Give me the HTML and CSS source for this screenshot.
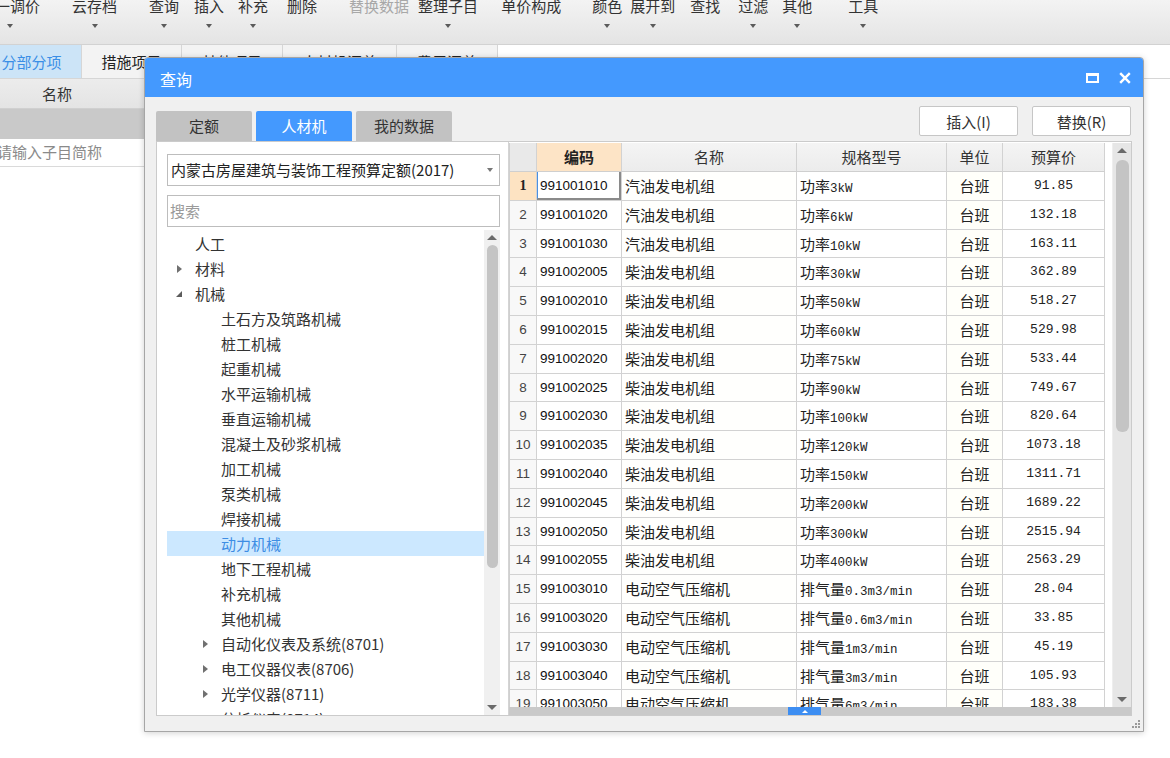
FILE: index.html
```html
<!DOCTYPE html>
<html lang="zh-CN">
<head>
<meta charset="utf-8">
<title>查询</title>
<link rel="stylesheet" href="styles.css">
</head>
<body>
<div class="app">
  <div class="toolbar">
    <div class="tb-item first"><span class="tb-label">统一调价</span><span class="tb-arrow"></span></div>
    <div class="tb-item m32"><span class="tb-label">云存档</span><span class="tb-arrow"></span></div>
    <div class="tb-item m32"><span class="tb-label">查询</span><span class="tb-arrow"></span></div>
    <div class="tb-item m15"><span class="tb-label">插入</span><span class="tb-arrow"></span></div>
    <div class="tb-item m14"><span class="tb-label">补充</span><span class="tb-arrow"></span></div>
    <div class="tb-item m19"><span class="tb-label">删除</span><span class="tb-arrow hidden"></span></div>
    <div class="tb-item m32 disabled"><span class="tb-label">替换数据</span><span class="tb-arrow hidden"></span></div>
    <div class="tb-item m9"><span class="tb-label">整理子目</span><span class="tb-arrow"></span></div>
    <div class="tb-item m23"><span class="tb-label">单价构成</span><span class="tb-arrow hidden"></span></div>
    <div class="tb-item m31"><span class="tb-label">颜色</span><span class="tb-arrow"></span></div>
    <div class="tb-item m8"><span class="tb-label">展开到</span><span class="tb-arrow"></span></div>
    <div class="tb-item m15"><span class="tb-label">查找</span><span class="tb-arrow hidden"></span></div>
    <div class="tb-item m18"><span class="tb-label">过滤</span><span class="tb-arrow"></span></div>
    <div class="tb-item m14"><span class="tb-label">其他</span><span class="tb-arrow"></span></div>
    <div class="tb-item m36"><span class="tb-label">工具</span><span class="tb-arrow"></span></div>
  </div>
  <div class="doc-tabs">
    <div class="doc-tab active">分部分项</div>
    <div class="doc-tab">措施项目</div>
    <div class="doc-tab w101">其他项目</div>
    <div class="doc-tab w114">人材机汇总</div>
    <div class="doc-tab w101">费用汇总</div>
  </div>
  <div class="sheet">
    <div class="sheet-head"><div class="sheet-col">名称</div></div>
    <div class="sheet-band"></div>
    <div class="sheet-input">请输入子目简称</div>
  </div>
</div>

<div class="dialog">
  <div class="dlg-title">
    <span class="dlg-name">查询</span>
    <div class="dlg-ctrls">
      <svg class="ic-max" width="13" height="10" viewBox="0 0 13 10"><path d="M1 1.5 H12 M1 1 V9 H12 V1" fill="none" stroke="#fff" stroke-width="2"/><rect x="0" y="0" width="13" height="3" fill="#fff"/></svg>
      <svg class="ic-close" width="12" height="12" viewBox="0 0 12 12"><path d="M1.2 1.2 L10.8 10.8 M10.8 1.2 L1.2 10.8" stroke="#fff" stroke-width="2.4"/></svg>
    </div>
  </div>
  <div class="dlg-body">
    <div class="dlg-top">
      <div class="dlg-tabs">
        <div class="dlg-tab">定额</div>
        <div class="dlg-tab active">人材机</div>
        <div class="dlg-tab">我的数据</div>
      </div>
      <div class="dlg-btns">
        <button class="btn">插入(I)</button>
        <button class="btn">替换(R)</button>
      </div>
    </div>
    <div class="dlg-content">
      <div class="left">
        <div class="select"><span>内蒙古房屋建筑与装饰工程预算定额(2017)</span><span class="caret-down"></span></div>
        <div class="search">搜索</div>
        <div class="tree-wrap">
          <ul class="tree">
            <li class="l0"><span class="tw"></span>人工</li>
            <li class="l0"><span class="tw closed"></span>材料</li>
            <li class="l0"><span class="tw open"></span>机械</li>
            <li class="l1"><span class="tw"></span>土石方及筑路机械</li>
            <li class="l1"><span class="tw"></span>桩工机械</li>
            <li class="l1"><span class="tw"></span>起重机械</li>
            <li class="l1"><span class="tw"></span>水平运输机械</li>
            <li class="l1"><span class="tw"></span>垂直运输机械</li>
            <li class="l1"><span class="tw"></span>混凝土及砂浆机械</li>
            <li class="l1"><span class="tw"></span>加工机械</li>
            <li class="l1"><span class="tw"></span>泵类机械</li>
            <li class="l1"><span class="tw"></span>焊接机械</li>
            <li class="l1 sel"><span class="tw"></span>动力机械</li>
            <li class="l1"><span class="tw"></span>地下工程机械</li>
            <li class="l1"><span class="tw"></span>补充机械</li>
            <li class="l1"><span class="tw"></span>其他机械</li>
            <li class="l1"><span class="tw closed"></span>自动化仪表及系统(8701)</li>
            <li class="l1"><span class="tw closed"></span>电工仪器仪表(8706)</li>
            <li class="l1"><span class="tw closed"></span>光学仪器(8711)</li>
            <li class="l1"><span class="tw closed"></span>分析仪表(8714)</li>
          </ul>
          <div class="vscroll small">
            <span class="arr-up"></span>
            <span class="thumb t-tree"></span>
            <span class="arr-down"></span>
          </div>
        </div>
      </div>
      <div class="right">
        <div class="grid-area">
          <div class="grid">
            <div class="row head">
              <div class="c n"></div>
              <div class="c code hl">编码</div>
              <div class="c name">名称</div>
              <div class="c spec">规格型号</div>
              <div class="c unit">单位</div>
              <div class="c price">预算价</div>
            </div>
            <div class="row cur"><div class="c n">1</div><div class="c code focus">991001010</div><div class="c name">汽油发电机组</div><div class="c spec">功率<span class="mono">3kW</span></div><div class="c unit">台班</div><div class="c price">91.85</div></div>
            <div class="row"><div class="c n">2</div><div class="c code">991001020</div><div class="c name">汽油发电机组</div><div class="c spec">功率<span class="mono">6kW</span></div><div class="c unit">台班</div><div class="c price">132.18</div></div>
            <div class="row"><div class="c n">3</div><div class="c code">991001030</div><div class="c name">汽油发电机组</div><div class="c spec">功率<span class="mono">10kW</span></div><div class="c unit">台班</div><div class="c price">163.11</div></div>
            <div class="row"><div class="c n">4</div><div class="c code">991002005</div><div class="c name">柴油发电机组</div><div class="c spec">功率<span class="mono">30kW</span></div><div class="c unit">台班</div><div class="c price">362.89</div></div>
            <div class="row"><div class="c n">5</div><div class="c code">991002010</div><div class="c name">柴油发电机组</div><div class="c spec">功率<span class="mono">50kW</span></div><div class="c unit">台班</div><div class="c price">518.27</div></div>
            <div class="row"><div class="c n">6</div><div class="c code">991002015</div><div class="c name">柴油发电机组</div><div class="c spec">功率<span class="mono">60kW</span></div><div class="c unit">台班</div><div class="c price">529.98</div></div>
            <div class="row"><div class="c n">7</div><div class="c code">991002020</div><div class="c name">柴油发电机组</div><div class="c spec">功率<span class="mono">75kW</span></div><div class="c unit">台班</div><div class="c price">533.44</div></div>
            <div class="row"><div class="c n">8</div><div class="c code">991002025</div><div class="c name">柴油发电机组</div><div class="c spec">功率<span class="mono">90kW</span></div><div class="c unit">台班</div><div class="c price">749.67</div></div>
            <div class="row"><div class="c n">9</div><div class="c code">991002030</div><div class="c name">柴油发电机组</div><div class="c spec">功率<span class="mono">100kW</span></div><div class="c unit">台班</div><div class="c price">820.64</div></div>
            <div class="row"><div class="c n">10</div><div class="c code">991002035</div><div class="c name">柴油发电机组</div><div class="c spec">功率<span class="mono">120kW</span></div><div class="c unit">台班</div><div class="c price">1073.18</div></div>
            <div class="row"><div class="c n">11</div><div class="c code">991002040</div><div class="c name">柴油发电机组</div><div class="c spec">功率<span class="mono">150kW</span></div><div class="c unit">台班</div><div class="c price">1311.71</div></div>
            <div class="row"><div class="c n">12</div><div class="c code">991002045</div><div class="c name">柴油发电机组</div><div class="c spec">功率<span class="mono">200kW</span></div><div class="c unit">台班</div><div class="c price">1689.22</div></div>
            <div class="row"><div class="c n">13</div><div class="c code">991002050</div><div class="c name">柴油发电机组</div><div class="c spec">功率<span class="mono">300kW</span></div><div class="c unit">台班</div><div class="c price">2515.94</div></div>
            <div class="row"><div class="c n">14</div><div class="c code">991002055</div><div class="c name">柴油发电机组</div><div class="c spec">功率<span class="mono">400kW</span></div><div class="c unit">台班</div><div class="c price">2563.29</div></div>
            <div class="row"><div class="c n">15</div><div class="c code">991003010</div><div class="c name">电动空气压缩机</div><div class="c spec">排气量<span class="mono">0.3m3/min</span></div><div class="c unit">台班</div><div class="c price">28.04</div></div>
            <div class="row"><div class="c n">16</div><div class="c code">991003020</div><div class="c name">电动空气压缩机</div><div class="c spec">排气量<span class="mono">0.6m3/min</span></div><div class="c unit">台班</div><div class="c price">33.85</div></div>
            <div class="row"><div class="c n">17</div><div class="c code">991003030</div><div class="c name">电动空气压缩机</div><div class="c spec">排气量<span class="mono">1m3/min</span></div><div class="c unit">台班</div><div class="c price">45.19</div></div>
            <div class="row"><div class="c n">18</div><div class="c code">991003040</div><div class="c name">电动空气压缩机</div><div class="c spec">排气量<span class="mono">3m3/min</span></div><div class="c unit">台班</div><div class="c price">105.93</div></div>
            <div class="row"><div class="c n">19</div><div class="c code">991003050</div><div class="c name">电动空气压缩机</div><div class="c spec">排气量<span class="mono">6m3/min</span></div><div class="c unit">台班</div><div class="c price">183.38</div></div>
          </div>
          <div class="vscroll big">
            <span class="arr-up"></span>
            <span class="thumb t-grid"></span>
            <span class="arr-down"></span>
          </div>
        </div>
        <div class="hscroll"><span class="hthumb"><span class="hthumb-arr"></span></span></div>
      </div>
    </div>
    <div class="dlg-foot">
      <svg class="grip" width="9" height="9" viewBox="0 0 9 9" fill="#9a9a9a"><rect x="7" y="1" width="2" height="2"/><rect x="4" y="4" width="2" height="2"/><rect x="7" y="4" width="2" height="2"/><rect x="1" y="7" width="2" height="2"/><rect x="4" y="7" width="2" height="2"/><rect x="7" y="7" width="2" height="2"/></svg>
    </div>
  </div>
</div>
</body>
</html>
```

FILE: styles.css
```css
* { box-sizing: border-box; }
html, body { margin: 0; padding: 0; }
body {
  width: 1170px;
  height: 758px;
  overflow: hidden;
  position: relative;
  background: #ffffff;
  font-family: "Noto Sans CJK SC", "Liberation Sans", sans-serif;
  font-size: 15px;
  color: #333;
}

/* ---------- background application ---------- */
.toolbar {
  height: 45px;
  display: flex;
  align-items: flex-start;
  background: linear-gradient(#f3f3f3, #e4e4e4);
  border-bottom: 1px solid #d2d2d2;
  overflow: hidden;
}
.tb-item {
  display: flex;
  flex-direction: column;
  align-items: center;
  color: #333;
}
.tb-item.first { margin-left: -20px; }
.tb-item.disabled { color: #a8a8a8; }
.tb-label {
  line-height: 20px;
  margin-top: -4px;
  white-space: nowrap;
}
.tb-arrow {
  width: 0;
  height: 0;
  margin-top: 8px;
  border-left: 3.5px solid transparent;
  border-right: 3.5px solid transparent;
  border-top: 4px solid #5a5a5a;
}
.tb-arrow.hidden { visibility: hidden; }
.m8 { margin-left: 8px; }
.m9 { margin-left: 9px; }
.m14 { margin-left: 14px; }
.m15 { margin-left: 15px; }
.m18 { margin-left: 18px; }
.m19 { margin-left: 19px; }
.m23 { margin-left: 23px; }
.m31 { margin-left: 31px; }
.m32 { margin-left: 32px; }
.m36 { margin-left: 36px; }

.doc-tabs {
  height: 34px;
  display: flex;
  margin-left: -18px;
  border-bottom: 1px solid #d6d6d6;
  background: #ffffff;
}
.doc-tab {
  width: 100px;
  line-height: 33px;
  text-align: center;
  background: #f3f3f3;
  border-right: 1px solid #d6d6d6;
  color: #222;
}
.doc-tab.w101 { width: 101px; }
.doc-tab.w114 { width: 114px; }
.doc-tab.active { background: #cce4f7; color: #3a8ee6; }

.sheet { width: 1100px; }
.sheet-head {
  height: 30px;
  background: linear-gradient(#ececec, #e4e4e4);
  border-bottom: 1px solid #d0d0d0;
}
.sheet-col {
  width: 114px;
  line-height: 29px;
  text-align: center;
  color: #333;
}
.sheet-band {
  height: 30px;
  background: #c9c9c9;
}
.sheet-input {
  height: 28px;
  line-height: 26px;
  margin-left: -3px;
  color: #8a8a8a;
  border-bottom: 1px solid #dadada;
}

/* ---------- dialog ---------- */
.dialog {
  position: absolute;
  left: 144px;
  top: 57px;
  width: 1000px;
  height: 675px;
  border: 1px solid #a6a6a6;
  border-radius: 4px 4px 0 0;
  background: #f0f0f0;
  box-shadow: 0 1px 6px rgba(0, 0, 0, 0.18);
  display: flex;
  flex-direction: column;
}
.dlg-title {
  height: 39px;
  flex: none;
  background: #4499fe;
  border-radius: 3px 3px 0 0;
  display: flex;
  align-items: center;
  padding: 0 12px 0 15px;
  color: #fff;
}
.dlg-name { font-size: 16px; line-height: 20px; margin-top: 2px; }
.dlg-ctrls {
  margin-left: auto;
  display: flex;
  align-items: center;
  gap: 20px;
  margin-top: 1px;
}
.ic-max { display: block; }
.ic-close { display: block; }

.dlg-body {
  flex: 1;
  display: flex;
  flex-direction: column;
  padding: 9px 11px 0 11px;
}
.dlg-top {
  height: 35px;
  display: flex;
  align-items: flex-start;
}
.dlg-tabs {
  display: flex;
  gap: 4px;
  margin-top: 5px;
}
.dlg-tab {
  width: 96px;
  height: 30px;
  line-height: 30px;
  text-align: center;
  background: #c2c2c2;
  border-radius: 2px 2px 0 0;
  color: #333;
}
.dlg-tab.active { background: #4499fe; color: #fff; }
.dlg-btns {
  margin-left: auto;
  display: flex;
  gap: 14px;
  margin-right: 1px;
}
.btn {
  width: 99px;
  height: 30px;
  padding: 0;
  background: #fff;
  border: 1px solid #c6c6c6;
  border-radius: 2px;
  font-family: "Noto Sans CJK SC", "Liberation Sans", sans-serif;
  font-size: 15px;
  color: #333;
}

.dlg-content {
  height: 575px;
  flex: none;
  background: #fff;
  border: 1px solid #cbcbcb;
  display: flex;
}

/* left panel */
.left {
  width: 352px;
  flex: none;
  border-right: 1px solid #d4d4d4;
  padding: 12px 8px 0 10px;
  display: flex;
  flex-direction: column;
}
.select {
  height: 32px;
  border: 1px solid #bdbdbd;
  display: flex;
  align-items: center;
  padding: 0 0 0 3px;
  color: #222;
  line-height: 20px;
}
.caret-down {
  margin-left: auto;
  margin-right: 6px;
  width: 0;
  height: 0;
  border-left: 3.5px solid transparent;
  border-right: 3.5px solid transparent;
  border-top: 4px solid #777;
}
.search {
  margin-top: 9px;
  height: 32px;
  border: 1px solid #bdbdbd;
  line-height: 30px;
  padding-left: 2px;
  color: #9a9a9a;
}
.tree-wrap {
  margin-top: 3px;
  height: 485px;
  display: flex;
}
.tree {
  flex: 1;
  list-style: none;
  margin: 0;
  padding: 1px 0 0 0;
  overflow: hidden;
}
.tree li {
  height: 25px;
  line-height: 25px;
  display: flex;
  align-items: center;
  white-space: nowrap;
  color: #333;
}
.tree li.l0 { padding-left: 7px; }
.tree li.l1 { padding-left: 33px; }
.tree li.sel { background: #cce8ff; color: #3d8de4; }
.tw {
  width: 14px;
  height: 25px;
  margin-right: 7px;
  position: relative;
  flex: none;
}
.tw.closed::before {
  content: "";
  position: absolute;
  left: 3px;
  top: 9px;
  border-top: 4px solid transparent;
  border-bottom: 4px solid transparent;
  border-left: 5px solid #707070;
}
.tw.open::before {
  content: "";
  position: absolute;
  left: 2px;
  top: 10px;
  border-left: 6px solid transparent;
  border-bottom: 6px solid #5c5c5c;
}

/* scrollbars */
.vscroll {
  flex: none;
  display: flex;
  flex-direction: column;
  align-items: center;
}
.vscroll.small { width: 16px; background: #f0f0f0; }
.vscroll.big {
  width: 19px;
  margin-left: auto;
  background: #e6e6e6;
  border-left: 1px solid #eeeeee;
}
.arr-up, .arr-down {
  width: 0;
  height: 0;
  border-left: 5px solid transparent;
  border-right: 5px solid transparent;
}
.arr-up { border-bottom: 5px solid #6a6a6a; margin-top: 5px; }
.arr-down { border-top: 5px solid #6a6a6a; margin-top: auto; margin-bottom: 5px; }
.thumb {
  display: block;
  background: #c4c4c4;
  border-radius: 6px;
}
.t-tree { width: 11px; height: 323px; margin-top: 5px; }
.t-grid { width: 13px; height: 272px; margin-top: 7px; }

/* right panel / grid */
.right {
  flex: 1;
  display: flex;
  flex-direction: column;
  padding-top: 1px;
  min-width: 0;
}
.grid-area {
  height: 564px;
  display: flex;
  overflow: hidden;
}
.grid {
  width: 596px;
  flex: none;
  border-left: 1px solid #cfcfcf;
  overflow: hidden;
}
.row {
  display: grid;
  grid-template-columns: 27px 85px 175px 150px 56px 102px;
  height: 28.8px;
}
.row.head { height: 29px; }
.c {
  border-right: 1px solid #d2d2d2;
  border-bottom: 1px solid #d2d2d2;
  display: block;
  line-height: 27.8px;
  white-space: nowrap;
  overflow: hidden;
  background: #fff;
  color: #222;
  position: relative;
}
.c.n {
  text-align: center;
  background: #f8f8f8;
  font-family: "Liberation Sans", sans-serif;
  font-size: 13.5px;
  color: #444;
}
.row.cur .c.n {
  background: #fde3c2;
  font-family: "Liberation Serif", serif;
  font-weight: bold;
  font-size: 14px;
  color: #222;
}
.c.code {
  padding-left: 3px;
  font-family: "Liberation Sans", sans-serif;
  font-size: 13.5px;
  color: #111;
}
.c.code.focus::after {
  content: "";
  position: absolute;
  left: -1px;
  top: -1px;
  right: 0;
  bottom: 0;
  border: 1px solid #7a7a7a;
  border-left: 2px solid #4a90e2;
  border-right: 2px solid #8a8a8a;
  border-bottom: 2px solid #8a8a8a;
}
.c.name { padding-left: 3px; background: #fffffd; }
.c.spec { padding-left: 3px; }
.mono {
  font-family: "Liberation Mono", monospace;
  font-size: 12.5px;
}
.c.unit { text-align: center; background: #fffffa; }
.c.price {
  text-align: center;
  font-family: "Liberation Mono", monospace;
  font-size: 13px;
  color: #222;
}

.row.head .c {
  text-align: center;
  background: linear-gradient(#f4f4f4, #ececec);
  color: #333;
  border-bottom: 1px solid #cfcfcf;
  font-family: "Noto Sans CJK SC", "Liberation Sans", sans-serif;
  font-size: 15px;
  font-weight: normal;
  line-height: 28px;
  padding: 0;
}
.row.head .c.n { background: #e9e9e9; }
.row.head .c.hl { background: #fde4c6; font-weight: bold; color: #222; }

.hscroll {
  height: 8px;
  background: #c9c9c9;
  display: flex;
}
.hthumb {
  margin-left: 279px;
  width: 33px;
  height: 8px;
  background: #3d8ef2;
  display: flex;
  justify-content: center;
  align-items: center;
}
.hthumb-arr {
  width: 0;
  height: 0;
  border-left: 3px solid transparent;
  border-right: 3px solid transparent;
  border-bottom: 3px solid #ffffff;
}

.dlg-foot {
  flex: 1;
  display: flex;
  justify-content: flex-end;
  align-items: flex-end;
  padding: 0 0 3px 0;
  margin-right: -8px;
}
.grip { display: block; }
```
